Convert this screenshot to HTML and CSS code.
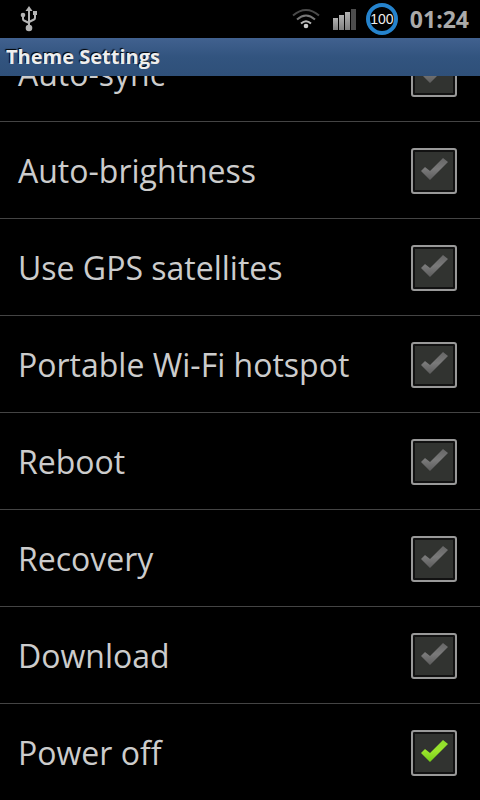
FILE: index.html
```html
<!DOCTYPE html>
<html lang="en">
<head>
<meta charset="utf-8">
<meta name="viewport" content="width=device-width, initial-scale=1">
<title>Theme Settings</title>
<link rel="stylesheet" href="styles.css">
</head>
<body>
<div class="status-bar">
  <svg class="usb" width="20" height="28" viewBox="0 0 20 28" role="img" aria-label="USB connected">
    <path d="M10 1L13.500 6H6.500Z"/>
    <circle cx="10" cy="23" r="3.300"/>
    <circle cx="4" cy="10" r="2.300"/>
    <rect x="14" y="6" width="4" height="4"/>
    <path class="wire" d="M10 4V22M4 10V14Q4 15 5 15.500L10 18M16 9V13Q16 14 15 14.500L10 17"/>
  </svg>
  <div class="indicators">
    <svg width="30" height="22" viewBox="0 0 30 22" role="img" aria-label="Wi-Fi">
      <path class="arc far" d="M2 7.500Q15 -3.500 28 7.500"/>
      <path class="arc mid" d="M6 11.500Q15 3.500 24 11.500"/>
      <path class="arc near" d="M10 15.500Q15 11 20 15.500"/>
      <circle cx="15" cy="18" r="2.300" fill="#ccc"/>
    </svg>
    <svg width="24" height="22" viewBox="0 0 24 22" role="img" aria-label="Signal strength">
      <defs>
        <linearGradient id="bar" x1="0" y1="0" x2="0" y2="1">
          <stop offset="0" stop-color="#b2b2b2"/>
          <stop offset="1" stop-color="#808080"/>
        </linearGradient>
      </defs>
      <rect x="0" y="10" width="5" height="12" fill="url(#bar)"/>
      <rect x="6" y="7" width="5" height="15" fill="url(#bar)"/>
      <rect x="12" y="4" width="5" height="18" fill="url(#bar)"/>
      <rect x="18" y="1" width="5" height="21" fill="#4c4c4c"/>
    </svg>
    <span class="battery">100</span>
    <time class="clock">01:24</time>
  </div>
</div>
<h1 class="title-bar">Theme Settings</h1>
<main class="settings">
  <label class="row"><span>Auto-sync</span><input type="checkbox"></label>
  <label class="row"><span>Auto-brightness</span><input type="checkbox"></label>
  <label class="row"><span>Use GPS satellites</span><input type="checkbox"></label>
  <label class="row"><span>Portable Wi-Fi hotspot</span><input type="checkbox"></label>
  <label class="row"><span>Reboot</span><input type="checkbox"></label>
  <label class="row"><span>Recovery</span><input type="checkbox"></label>
  <label class="row"><span>Download</span><input type="checkbox"></label>
  <label class="row"><span>Power off</span><input type="checkbox" checked></label>
</main>
</body>
</html>
```
FILE: styles.css
```css
* {
  box-sizing: border-box;
}

body {
  margin: 0;
  height: 100vh;
  display: flex;
  flex-direction: column;
  overflow: hidden;
  background: #000;
  color: #ccc;
  font-family: "Open Sans", "Noto Sans", sans-serif;
}

.status-bar {
  flex: none;
  display: flex;
  align-items: center;
  justify-content: space-between;
  height: 38px;
  padding: 0 11px 0 19px;
}

.usb {
  fill: #b4b4b4;
}

.wire {
  fill: none;
  stroke: #b4b4b4;
  stroke-width: 2;
}

.indicators {
  display: flex;
  align-items: center;
  gap: 12px;
}

.arc {
  fill: none;
  stroke-width: 2;
}

.far {
  stroke: #4a4a4a;
}

.mid {
  stroke: #777;
}

.near {
  stroke: #b8b8b8;
}

.battery {
  width: 32px;
  height: 32px;
  margin-left: -3px;
  border: 4px solid #2583cd;
  border-radius: 50%;
  color: #eee;
  font: 14px/24px "Liberation Sans", sans-serif;
  display: flex;
  justify-content: center;
}

.clock {
  color: #aaa;
  font-size: 23px;
  font-weight: 700;
}

.title-bar {
  flex: none;
  margin: 0;
  height: 38px;
  padding: 0 6px;
  background: linear-gradient(#41618f, #32547f 50%, #2f5079);
  color: #eee;
  font-size: 20px;
  font-weight: 700;
  line-height: 38px;
  text-shadow: -1px -1px 1px #000;
}

/* The list is scrolled to its end */
.settings {
  flex: 1;
  min-height: 0;
  display: flex;
  flex-direction: column;
  justify-content: flex-end;
  overflow: hidden;
}

.row {
  flex: none;
  display: flex;
  align-items: center;
  justify-content: space-between;
  height: 97px;
  padding: 0 23px 0 18px;
  border-top: 1px solid #444;
  font-size: 32px;
}

.row input {
  appearance: none;
  flex: none;
  width: 46px;
  height: 46px;
  margin: 2px 0 0;
  border: 2px solid #999;
  border-radius: 3px;
  background: #313330;
  box-shadow: inset 0 0 0 2px #121212;
}

.row input::before {
  content: "";
  display: block;
  width: 27px;
  height: 22px;
  margin: 8px;
  background: linear-gradient(#666, #7a7a7a 50%, #5c5c5c);
  clip-path: polygon(0 13px, 4px 9px, 9px 13px, 22px 0, 27px 4px, 9px 22px);
}

.row input:checked::before {
  background: linear-gradient(#8edb2c, #9be52c 50%, #74cc18);
}
```
